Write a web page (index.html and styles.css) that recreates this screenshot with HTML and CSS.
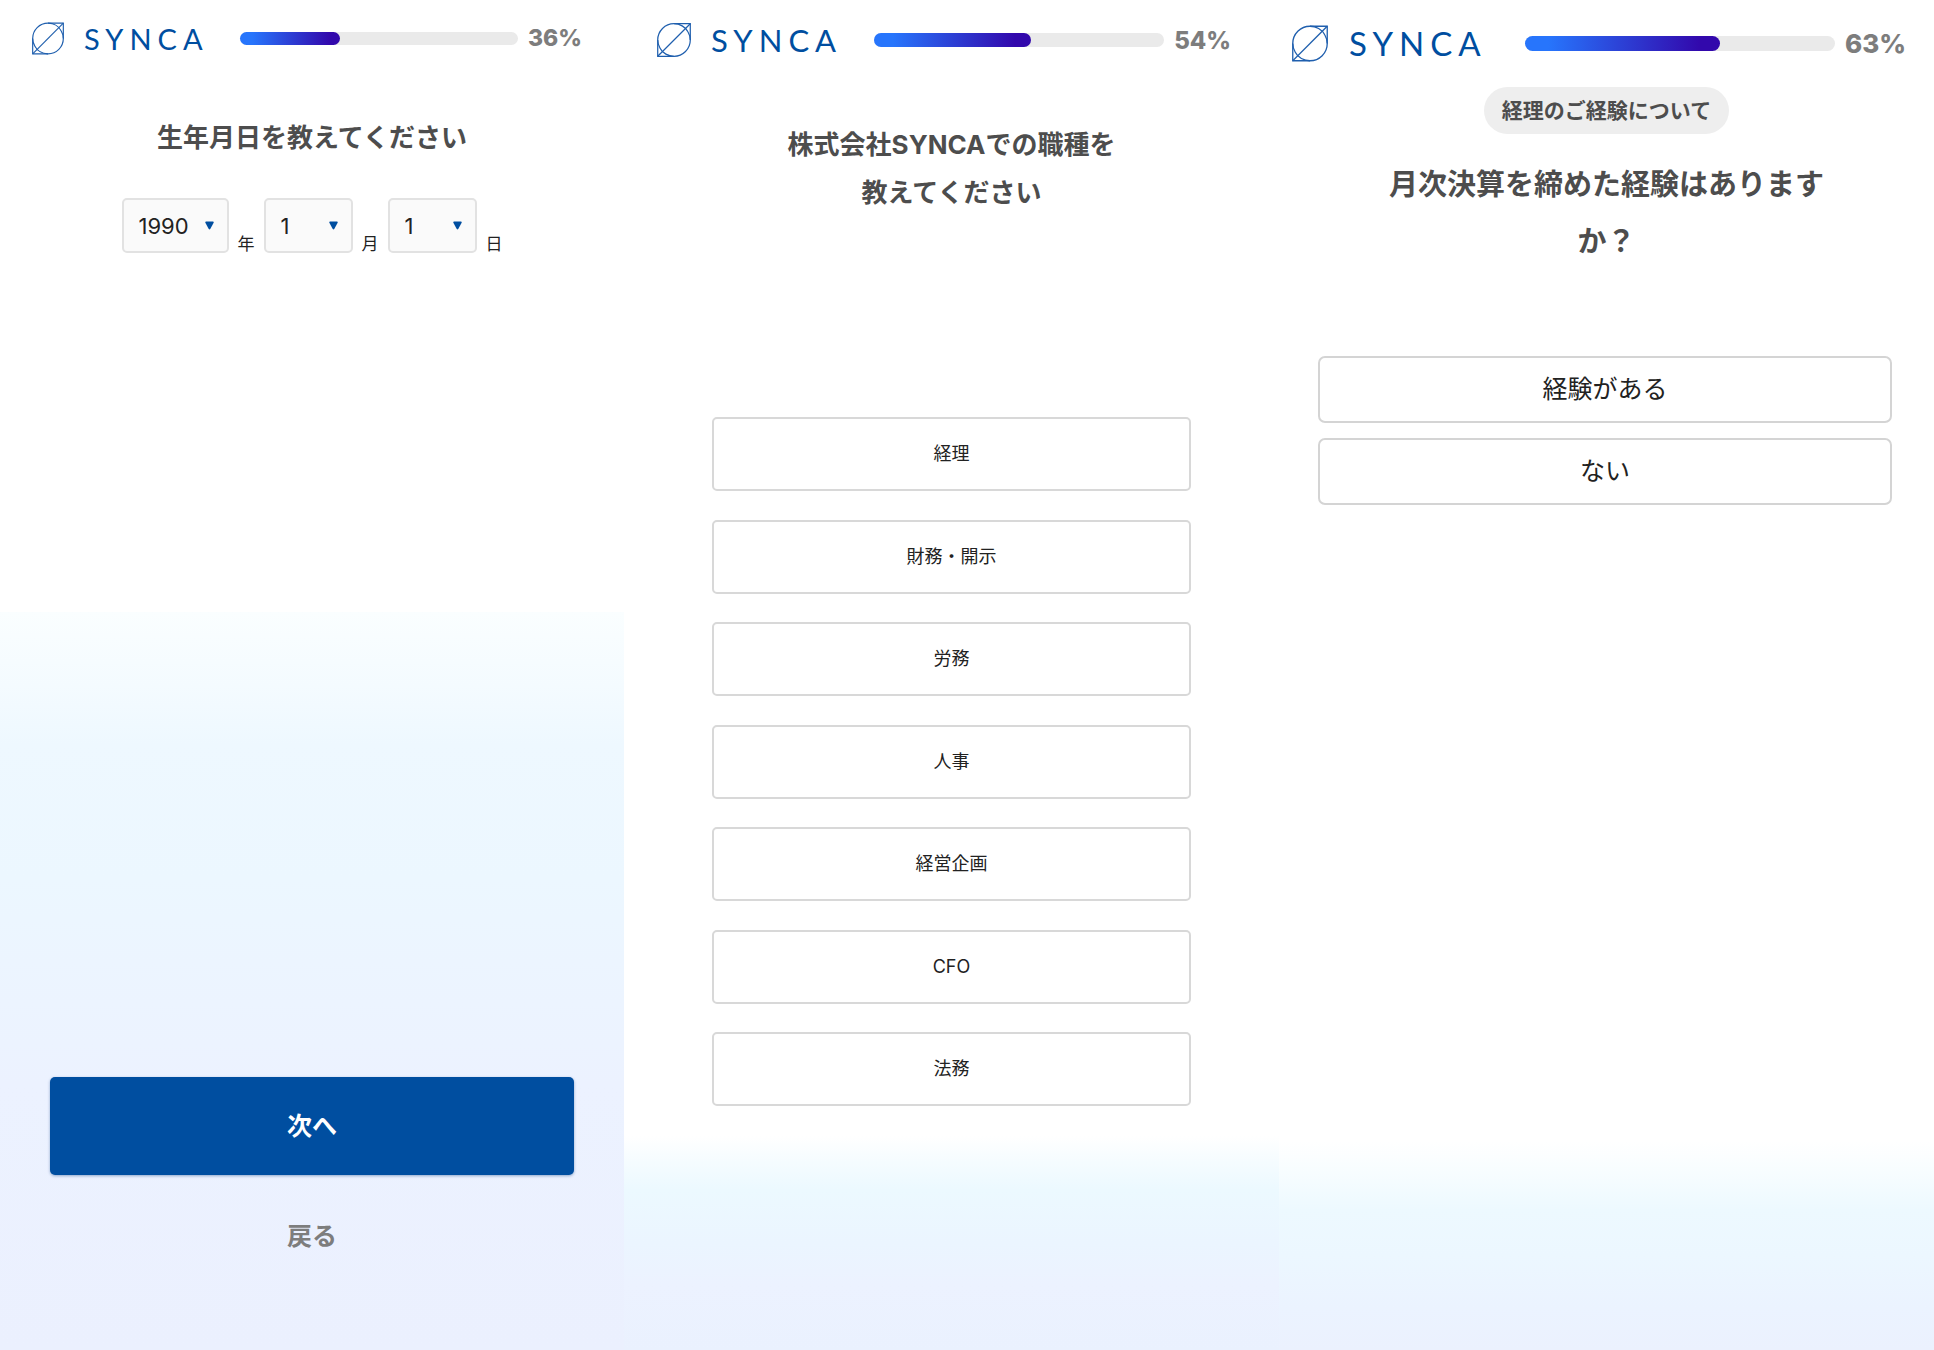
FILE: index.html
```html
<!DOCTYPE html>
<html lang="ja">
<head>
    <meta charset="UTF-8">
    <meta name="viewport" content="width=device-width, initial-scale=1.0">
    <title>SYNCA</title>
    <link rel="stylesheet" href="styles.css">
</head>
<body>

    <!-- ロゴマーク -->
    <svg class="symbols" width="0" height="0" aria-hidden="true">
        <symbol id="mark" viewBox="0 0 33 33">
            <path d="M32.3 .7H16.5A15.8 15.8 0 0 0 .7 16.5V32.3H16.5A15.8 15.8 0 0 0 32.3 16.5Z"/>
            <path d="M32.3 .7L.7 32.3"/>
            <path d="M16.5 .7C22 .7 27.600 3.600 30 8.500C31.500 11 32.300 14 32.300 16.500M16.500 32.300C11 32.300 5.400 29.400 3 24.500C1.500 22 .7 19 .7 16.500"/>
        </symbol>
    </svg>

    <div class="screens">

        <!-- 生年月日 -->
        <section class="screen screen-birth">
            <header class="header">
                <a class="logo" href="#"><svg class="logo-mark"><use href="#mark"/></svg><span class="logo-text">SYNCA</span></a>
                <div class="progress" role="progressbar" aria-label="進捗" aria-valuenow="36"><div class="progress-fill" style="width: 36%"></div></div>
                <span class="percent">36%</span>
            </header>
            <h1 class="question">生年月日を教えてください</h1>
            <form class="birth-form">
                <div class="select select-year">
                    <select id="year" aria-label="年"><option>1990</option></select>
                    <svg class="arrow" viewBox="0 0 10 9"><path d="M1 0H9Q10 .3 9.600 1.500L6 8.200Q5 9.500 4 8.200L.4 1.500Q0 .3 1 0Z"/></svg>
                </div>
                <label class="unit" for="year">年</label>
                <div class="select">
                    <select id="month" aria-label="月"><option>1</option></select>
                    <svg class="arrow" viewBox="0 0 10 9"><path d="M1 0H9Q10 .3 9.600 1.500L6 8.200Q5 9.500 4 8.200L.4 1.500Q0 .3 1 0Z"/></svg>
                </div>
                <label class="unit" for="month">月</label>
                <div class="select">
                    <select id="day" aria-label="日"><option>1</option></select>
                    <svg class="arrow" viewBox="0 0 10 9"><path d="M1 0H9Q10 .3 9.600 1.500L6 8.200Q5 9.500 4 8.200L.4 1.500Q0 .3 1 0Z"/></svg>
                </div>
                <label class="unit" for="day">日</label>
            </form>
            <div class="actions">
                <button class="next" type="button">次へ</button>
                <button class="back" type="button">戻る</button>
            </div>
        </section>

        <!-- 職種 -->
        <section class="screen screen-job">
            <header class="header">
                <a class="logo" href="#"><svg class="logo-mark"><use href="#mark"/></svg><span class="logo-text">SYNCA</span></a>
                <div class="progress" role="progressbar" aria-label="進捗" aria-valuenow="54"><div class="progress-fill" style="width: 54%"></div></div>
                <span class="percent">54%</span>
            </header>
            <h1 class="question">株式会社SYNCAでの職種を<br>教えてください</h1>
            <div class="options">
                <button class="option" type="button">経理</button>
                <button class="option" type="button">財務・開示</button>
                <button class="option" type="button">労務</button>
                <button class="option" type="button">人事</button>
                <button class="option" type="button">経営企画</button>
                <button class="option" type="button">CFO</button>
                <button class="option" type="button">法務</button>
            </div>
        </section>

        <!-- 経理の経験 -->
        <section class="screen screen-experience">
            <header class="header">
                <a class="logo" href="#"><svg class="logo-mark"><use href="#mark"/></svg><span class="logo-text">SYNCA</span></a>
                <div class="progress" role="progressbar" aria-label="進捗" aria-valuenow="63"><div class="progress-fill" style="width: 63%"></div></div>
                <span class="percent">63%</span>
            </header>
            <p class="topic">経理のご経験について</p>
            <h1 class="question">月次決算を締めた経験はあります<br>か？</h1>
            <div class="options">
                <button class="option" type="button">経験がある</button>
                <button class="option" type="button">ない</button>
            </div>
        </section>

    </div>

</body>
</html>
```
FILE: styles.css
```css
* {
    box-sizing: border-box;
}
body {
    margin: 0;
    background: #fff;
    color: #222;
    font-family: Inter, "Noto Sans CJK JP", sans-serif;
}
button, select {
    font-family: inherit;
    color: inherit;
    line-height: 1;
    cursor: pointer;
}
.symbols {
    position: absolute;
}
.screens {
    display: grid;
    grid-template-columns: 624fr 655fr 655fr;
    min-height: 100vh;
}
.screen {
    display: flex;
    flex-direction: column;
    align-items: center;
    background-repeat: no-repeat;
    background-position: bottom;
}

/* ヘッダー */
.header {
    display: flex;
    align-items: center;
    align-self: stretch;
}
.logo {
    display: flex;
    align-items: center;
    color: #004ea0;
    text-decoration: none;
}
.logo-mark {
    fill: none;
    stroke: #1f5fae;
    stroke-width: 1.2;
}
.logo-text {
    font-family: Lato, sans-serif;
    letter-spacing: 6px;
    line-height: 1;
}
.progress {
    flex: 1;
    background: #eaeaea;
    border-radius: 8px;
}
.progress-fill {
    height: 100%;
    border-radius: 8px;
    background: linear-gradient(90deg, #2775fc 12%, #3208ac 90%);
}
.percent {
    margin-left: 10px;
    color: #7d7d7d;
    font-weight: 800;
}
.question {
    margin: 0;
    color: #4d4d4d;
    font-weight: 700;
    text-align: center;
}
.options {
    display: flex;
    flex-direction: column;
    align-self: stretch;
}
.option {
    padding: 0;
    border: 2px solid #d8d8d8;
    background: #fff;
}

/* 生年月日 */
.screen-birth {
    background-image: linear-gradient(#fafeff, #f4fbff 10%, #eef8ff 18%, #ecf7ff 36%, #ecf2ff 64%, #ebf0fe);
    background-size: 100% 738px;
}
.screen-birth .header {
    height: 76px;
    padding: 0 42px 0 32px;
}
.screen-birth .logo-mark {
    width: 32px;
    height: 33px;
    margin-right: 20px;
}
.screen-birth .logo-text {
    font-size: 29px;
}
.screen-birth .progress {
    height: 13px;
    margin-left: 31px;
}
.screen-birth .percent {
    font-size: 23px;
}
.screen-birth .question {
    margin-top: 39px;
    font-size: 26px;
    line-height: 46px;
}
.birth-form {
    display: flex;
    align-items: flex-end;
    gap: 9px;
    margin-top: 37px;
}
.select {
    display: grid;
    align-items: center;
    width: 89px;
}
.select-year {
    width: 107px;
}
.select select, .arrow {
    grid-area: 1 / 1;
}
.select select {
    height: 55px;
    padding: 0 0 0 15px;
    border: 2px solid #e2e2e2;
    border-radius: 5px;
    background: #fafafa;
    font-size: 22px;
    appearance: none;
}
.arrow {
    justify-self: end;
    width: 9px;
    height: 9px;
    margin-right: 15px;
    fill: #004ea0;
    pointer-events: none;
}
.unit {
    font-size: 17px;
    line-height: 18px;
}
.actions {
    display: flex;
    flex-direction: column;
    align-items: center;
    align-self: stretch;
    gap: 41px;
    margin-top: auto;
    padding: 0 50px 94px;
}
.next {
    align-self: stretch;
    height: 98px;
    border: 0;
    border-radius: 5px;
    background: #004ea0;
    box-shadow: 0 1px 3px rgba(0, 60, 130, 0.4);
    color: #fff;
    font-size: 25px;
    font-weight: 700;
}
.back {
    height: 40px;
    padding: 0;
    border: 0;
    background: none;
    color: #7d7d7d;
    font-size: 25px;
    font-weight: 700;
}

/* 職種 */
.screen-job {
    background-image: linear-gradient(#fff, #f5fcff 12%, #ecf9ff 25%, #ebf5ff 50%, #ecf2ff 70%, #eaf1fe);
    background-size: 100% 214px;
}
.screen-job .header {
    height: 80px;
    padding: 0 48px 0 33px;
}
.screen-job .logo-mark {
    width: 34px;
    height: 34px;
    margin-right: 20px;
}
.screen-job .logo-text {
    font-size: 31px;
}
.screen-job .progress {
    height: 14px;
    margin-left: 32px;
}
.screen-job .percent {
    font-size: 24px;
}
.screen-job .question {
    margin-top: 41px;
    font-size: 26px;
    line-height: 48px;
}
.screen-job .options {
    justify-content: space-between;
    min-height: 689px;
    margin-top: 200px;
    padding: 0 88px;
}
.screen-job .option {
    height: 74px;
    border-radius: 5px;
    font-size: 18px;
}

/* 経理の経験 */
.screen-experience {
    background-image: linear-gradient(#fff, #f7fdff 15%, #edf9ff 33%, #ecf7ff 55%, #ebf3ff 80%, #ebf1fe);
    background-size: 100% 209px;
}
.screen-experience .header {
    height: 87px;
    padding: 0 28px 0 13px;
}
.screen-experience .logo-mark {
    width: 36px;
    height: 37px;
    margin-right: 21px;
}
.screen-experience .logo-text {
    font-size: 33px;
}
.screen-experience .progress {
    height: 15px;
    margin-left: 38px;
}
.screen-experience .percent {
    font-size: 26px;
}
.topic {
    margin: 0;
    padding: 0 18px;
    border-radius: 24px;
    background: #eee;
    color: #4d4d4d;
    font-size: 21px;
    font-weight: 700;
    line-height: 47px;
}
.screen-experience .question {
    margin-top: 22px;
    font-size: 29px;
    line-height: 57px;
}
.screen-experience .options {
    gap: 15px;
    margin-top: 86px;
    padding: 0 42px 0 39px;
}
.screen-experience .option {
    height: 67px;
    border-color: #d4d4d4;
    border-radius: 7px;
    font-size: 25px;
}
```
